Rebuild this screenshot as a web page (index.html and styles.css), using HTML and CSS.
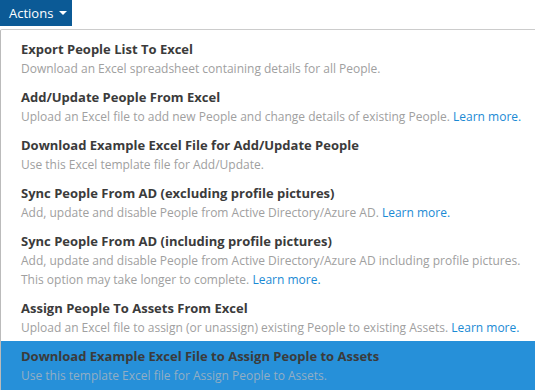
FILE: index.html
```html
<!DOCTYPE html>
<html lang="en">

<head>
    <meta charset="UTF-8">
    <meta name="viewport" content="width=device-width, initial-scale=1.0">
    <title>Actions</title>
    <link rel="stylesheet" href="styles.css">
</head>

<body>
    <div class="actions">
        <button class="actions-btn">Actions <span class="caret"></span></button>

        <ul class="menu">
            <li class="item">
                <p class="title">Export People List To Excel</p>
                <p class="desc">Download an Excel spreadsheet containing details for all People.</p>
            </li>
            <li class="item">
                <p class="title">Add/Update People From Excel</p>
                <p class="desc">Upload an Excel file to add new People and change details of existing People. <a href="#">Learn more.</a></p>
            </li>
            <li class="item">
                <p class="title">Download Example Excel File for Add/Update People</p>
                <p class="desc">Use this Excel template file for Add/Update.</p>
            </li>
            <li class="item">
                <p class="title">Sync People From AD (excluding profile pictures)</p>
                <p class="desc">Add, update and disable People from Active Directory/Azure AD. <a href="#">Learn more.</a></p>
            </li>
            <li class="item">
                <p class="title">Sync People From AD (including profile pictures)</p>
                <p class="desc">Add, update and disable People from Active Directory/Azure AD including profile pictures.<br>This option may take longer to complete. <a href="#">Learn more.</a></p>
            </li>
            <li class="item">
                <p class="title">Assign People To Assets From Excel</p>
                <p class="desc">Upload an Excel file to assign (or unassign) existing People to existing Assets. <a href="#">Learn more.</a></p>
            </li>
            <li class="item active">
                <p class="title">Download Example Excel File to Assign People to Assets</p>
                <p class="desc">Use this template Excel file for Assign People to Assets.</p>
            </li>
        </ul>
    </div>
</body>

</html>
```

FILE: styles.css
```css
* {
    margin: 0;
    padding: 0;
    box-sizing: border-box;
}

body {
    background-color: white;
    font-family: "Open Sans", Arial, sans-serif;
    overflow: hidden;
}

.actions-btn {
    display: flex;
    align-items: center;
    gap: 6px;
    height: 26px;
    width: 72px;
    padding-left: 9px;
    border: none;
    background-color: #0b5a96;
    color: white;
    font-family: inherit;
    font-size: 13px;
}

.caret {
    width: 0;
    height: 0;
    border-left: 4px solid transparent;
    border-right: 4px solid transparent;
    border-top: 4px solid white;
}

.menu {
    list-style: none;
    margin-top: 3px;
    width: 560px;
    padding-top: 4px;
    border-top: 1px solid #cccccc;
    border-left: 1px solid #bbbbbb;
    border-top-left-radius: 2px;
}

.item {
    padding: 6px 20px 4px;
    cursor: pointer;
}

.title {
    font-size: 13px;
    font-weight: 700;
    line-height: 19px;
    color: #3b3b3b;
}

.desc {
    font-size: 12px;
    line-height: 19px;
    color: #a0a0a0;
}

.desc a {
    color: #1a8ad4;
    text-decoration: none;
}

.item.active {
    background-color: #2690d9;
    padding-bottom: 12px;
}

.item.active .desc {
    color: #93aec4;
}
```
